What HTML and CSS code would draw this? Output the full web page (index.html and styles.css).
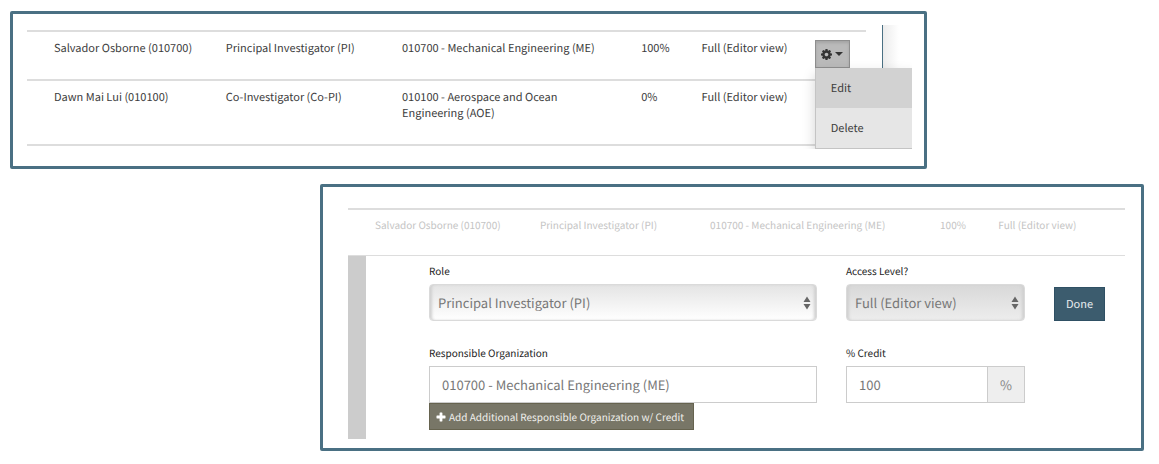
FILE: index.html
```html
<!DOCTYPE html>
<html lang="en">
<head>
<meta charset="utf-8">
<title>Investigators</title>
<link rel="stylesheet" href="styles.css">
</head>
<body>
<section class="panel panel-list">
  <div class="list-view">
    <table class="people">
      <colgroup>
        <col class="col-name"><col class="col-role"><col class="col-org"><col class="col-credit"><col class="col-access"><col class="col-action">
      </colgroup>
      <tbody>
        <tr>
          <td>Salvador Osborne (010700)</td>
          <td>Principal Investigator (PI)</td>
          <td>010700 - Mechanical Engineering (ME)</td>
          <td>100%</td>
          <td>Full (Editor view)</td>
          <td class="action-cell">
            <div class="dropdown">
              <button class="gear-button" type="button" aria-label="Actions" aria-expanded="true">
                <svg class="gear" viewBox="0 0 1536 1536" aria-hidden="true"><path fill-rule="evenodd" d="M1024 768q0-106-75-181t-181-75-181 75-75 181 75 181 181 75 181-75 75-181zm512-109v222q0 12-8 23t-20 13l-185 28q-19 54-39 91 35 50 107 138 10 12 10 25t-9 23q-27 37-99 108t-94 71q-12 0-26-9l-138-108q-44 23-91 38-16 136-29 186-7 28-36 28H657q-14 0-24.500-8.500T621 1506l-28-184q-49-16-90-37l-141 107q-10 9-25 9-14 0-25-11-126-114-165-168-7-10-7-23 0-12 8-23 15-21 51-66.500t54-70.500q-27-50-41-99L29 913q-13-2-21-12.500T0 877V655q0-12 8-23t19-13l186-28q14-46 39-92-40-57-107-138-10-12-10-24 0-10 9-23 26-36 98.500-107.500T337 135q13 0 26 10l138 107q44-23 91-38 16-136 29-186 7-28 36-28h222q14 0 24.500 8.500T915 30l28 184q49 16 90 37l142-107q9-9 24-9 13 0 25 10 129 119 165 170 7 8 7 22 0 12-8 23-15 21-51 66.500t-54 70.500q26 50 41 98l183 28q13 2 21 12.500t8 23.500z"/></svg>
                <svg class="caret" viewBox="0 0 8 4" aria-hidden="true"><path d="M0 0h8L4 4z"/></svg>
              </button>
              <div class="menu">
                <button class="menu-item active" type="button">Edit</button>
                <button class="menu-item" type="button">Delete</button>
              </div>
            </div>
          </td>
        </tr>
        <tr>
          <td>Dawn Mai Lui (010100)</td>
          <td>Co-Investigator (Co-PI)</td>
          <td>010100 - Aerospace and Ocean Engineering (AOE)</td>
          <td>0%</td>
          <td>Full (Editor view)</td>
          <td></td>
        </tr>
      </tbody>
    </table>
    <div class="page-edge"></div>
  </div>
</section>

<section class="panel panel-edit">
  <table class="people muted">
    <colgroup>
      <col class="col-name"><col class="col-role"><col class="col-org"><col class="col-credit"><col class="col-access-wide">
    </colgroup>
    <tbody>
      <tr>
        <td>Salvador Osborne (010700)</td>
        <td>Principal Investigator (PI)</td>
        <td>010700 - Mechanical Engineering (ME)</td>
        <td>100%</td>
        <td>Full (Editor view)</td>
      </tr>
    </tbody>
  </table>
  <form class="edit-form">
    <div class="field">
      <label for="role">Role</label>
      <div class="select-wrap">
        <select id="role"><option>Principal Investigator (PI)</option></select>
        <svg class="arrows" viewBox="0 0 8 14" aria-hidden="true"><path d="M.5 6h7L4 0.500zM.5 8h7L4 13.500z"/></svg>
      </div>
    </div>
    <div class="field">
      <label for="access">Access Level?</label>
      <div class="select-wrap shaded">
        <select id="access"><option>Full (Editor view)</option></select>
        <svg class="arrows" viewBox="0 0 8 14" aria-hidden="true"><path d="M.5 6h7L4 0.500zM.5 8h7L4 13.500z"/></svg>
      </div>
    </div>
    <button class="done" type="button">Done</button>
    <div class="field">
      <label for="org">Responsible Organization</label>
      <input id="org" type="text" value="010700 - Mechanical Engineering (ME)">
      <button class="add" type="button">
        <svg class="plus" viewBox="0 0 10 10" aria-hidden="true"><path d="M4 .5h2q.4 0 .4.4v2.700h2.700q.4 0 .4.4v2q0 .4-.4.4H6.400v2.700q0 .4-.4.4H4q-.4 0-.4-.4V6.400H.9Q.5 6.400.5 6V4q0-.4.4-.4h2.700V.9q0-.4.4-.4z"/></svg>
        Add Additional Responsible Organization w/ Credit
      </button>
    </div>
    <div class="field">
      <label for="credit">% Credit</label>
      <div class="input-group">
        <input id="credit" type="text" value="100">
        <span class="addon">%</span>
      </div>
    </div>
  </form>
</section>
</body>
</html>
```

FILE: styles.css
```css
* {
  box-sizing: border-box;
}

body {
  margin: 0;
  padding: 11px 15px 13px 10px;
  background: #fff;
  color: #3c3c3c;
  font: 11px/16px "Noto Sans CJK SC", "Open Sans", sans-serif;
  text-rendering: geometricPrecision;
}

button,
input,
select {
  margin: 0;
  border-radius: 0;
  font: inherit;
  color: inherit;
  text-rendering: inherit;
}

.panel {
  border: 3px solid #4a7083;
  border-radius: 2px;
}

.panel-list {
  margin-right: 217px;
  padding: 11px 12px 17px 14px;
}

.panel-edit {
  margin: 15px 0 0 310px;
  padding: 21px 16px 9px 25px;
}

.list-view {
  display: flex;
  overflow: hidden;
}

.list-view .people {
  flex: 1;
  margin: 5px 16px 3px 0;
  border-bottom: 2px solid #ddd;
}

.page-edge {
  width: 30px;
  border-left: 1px solid #4a7083;
  background: linear-gradient(to right, #ececec, #fff 16px);
}

.people {
  width: 100%;
  table-layout: fixed;
  border-collapse: separate;
  border-spacing: 0;
}

.people td {
  padding: 8px 0 23px;
  border-top: 2px solid #ddd;
  vertical-align: top;
}

.people td:first-child {
  padding-left: 27px;
}

.people td:nth-child(3) {
  padding-right: 48px;
}

.people tr:first-child td:nth-child(3) {
  padding-right: 0;
}

.col-name { width: 23.7%; }
.col-role { width: 21%; }
.col-org { width: 28.5%; }
.col-credit { width: 7.2%; }
.col-access { width: 13.5%; }
.col-action { width: 6.1%; }
.col-access-wide { width: 16.3%; }
.muted .col-name { width: 24.7%; }
.muted .col-role { width: 21.9%; }
.muted .col-org { width: 29.6%; }
.muted .col-credit { width: 7.5%; }

.people .action-cell {
  padding-bottom: 0;
}

.dropdown {
  position: relative;
  width: 35px;
}

.gear-button {
  display: flex;
  align-items: center;
  justify-content: center;
  gap: 3px;
  width: 35px;
  height: 28px;
  padding: 0;
  border: 1px solid #8e8e8e;
  background: #bababa;
  box-shadow: inset 0 2px 3px #a4a4a4;
}

.gear {
  width: 11px;
  height: 11px;
  fill: #333;
}

.caret {
  width: 8px;
  height: 4px;
  fill: #333;
}

.menu {
  position: absolute;
  top: 28px;
  left: 0;
  width: 98px;
  border: 1px solid #c4c4c4;
  border-top: 0;
  background: #e6e6e6;
  box-shadow: 0 6px 12px rgba(0, 0, 0, 0.18);
}

.menu-item {
  display: block;
  width: 100%;
  height: 40px;
  padding: 0 15px;
  border: 0;
  background: transparent;
  text-align: left;
}

.menu-item.active {
  background: #d2d2d2;
}

.muted {
  font-size: 10px;
  color: #c4c4c4;
}

.muted td {
  padding: 7px 0 22px;
}

.edit-form {
  display: grid;
  grid-template-columns: minmax(0, 388fr) minmax(0, 179fr) 51px;
  gap: 0 29px;
  padding: 7px 20px 9px 81px;
  border-top: 1px solid #ddd;
  background: linear-gradient(#ccc, #ccc) left / 18px 100% no-repeat;
  background-origin: border-box;
}

.field label {
  display: block;
  margin-bottom: 5px;
  font-size: 10px;
  color: #222;
}

.field:first-child {
  margin-bottom: 24px;
}

.select-wrap {
  position: relative;
}

.select-wrap select {
  display: block;
  width: 100%;
  height: 37px;
  padding: 0 28px 0 8px;
  border: 1px solid #dadada;
  border-radius: 4px;
  appearance: none;
  background: linear-gradient(#e4e4e4, #fff);
  box-shadow: inset 3px 0 3px -1px #d0d0d0, inset -3px 0 3px -1px #d0d0d0;
  font-size: 13px;
  color: #777;
}

.select-wrap.shaded select {
  background: linear-gradient(#d8d8d8, #ededed);
}

.arrows {
  position: absolute;
  top: 12px;
  right: 6px;
  width: 8px;
  height: 14px;
  fill: #666;
  pointer-events: none;
}

.field input {
  display: block;
  width: 100%;
  min-width: 0;
  height: 37px;
  padding: 0 12px;
  border: 1px solid #ccc;
  background: #fff;
  font-size: 13px;
  color: #777;
}

.input-group {
  display: flex;
}

.addon {
  flex: none;
  width: 37px;
  border: 1px solid #ccc;
  border-left: 0;
  background: #eee;
  line-height: 35px;
  text-align: center;
  font-size: 13px;
  color: #888;
}

.done {
  align-self: start;
  height: 34px;
  margin-top: 24px;
  padding: 0;
  border: 1px solid #2f5064;
  background: #3c5c6e;
  color: #e8edf0;
}

.add {
  display: flex;
  align-items: center;
  gap: 3px;
  height: 27px;
  padding: 0 9px 0 6px;
  border: 1px solid #66634f;
  background: #787667;
  font-size: 10px;
  color: #f0f0ec;
  white-space: nowrap;
}

.plus {
  width: 10px;
  height: 10px;
  fill: #fff;
}
```
